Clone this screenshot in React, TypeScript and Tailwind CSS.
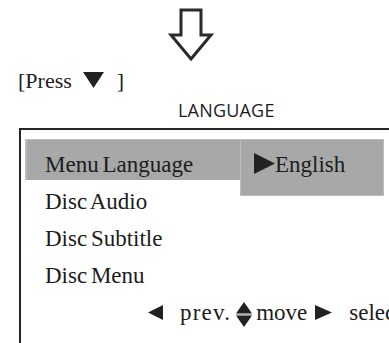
const serif = { fontFamily: '"Liberation Serif", "Times New Roman", serif' };

const DownArrow = () => (
  <svg width="46" height="53" viewBox="0 0 46 53" className="block">
    <path
      d="M13 2 H33 V27 H43 L23 51 L3 27 H13 Z"
      fill="#fff"
      stroke="#2a2a2a"
      strokeWidth="3"
      strokeLinejoin="miter"
    />
  </svg>
);

const Tri = ({ dir, w, h, className }: { dir: 'down' | 'left' | 'right'; w: number; h: number; className?: string }) => {
  const pts =
    dir === 'down'
      ? `0,0 ${w},0 ${w / 2},${h}`
      : dir === 'left'
        ? `${w},0 ${w},${h} 0,${h / 2}`
        : `0,0 ${w},${h / 2} 0,${h}`;
  return (
    <svg width={w} height={h} viewBox={`0 0 ${w} ${h}`} className={className}>
      <polygon points={pts} fill="#222" />
    </svg>
  );
};

const UpDown = ({ className }: { className?: string }) => (
  <svg width="16" height="25" viewBox="0 0 16 25" className={className}>
    <polygon points="0,11.5 8,0 16,11.5" fill="#222" />
    <polygon points="0,13.5 8,25 16,13.5" fill="#222" />
    <line x1="0" y1="12.5" x2="16" y2="12.5" stroke="#777" strokeWidth="0.6" />
  </svg>
);

const rows = ['Disc Audio', 'Disc Subtitle', 'Disc Menu'];

export default function App() {
  return (
    <div className="w-[389px] h-[343px] bg-white overflow-hidden text-[#1c1c1c]">
      <div className="pt-[8px] pl-[168px]">
        <DownArrow />
      </div>

      <div
        className="mt-[9px] pl-[18px] h-[22px] text-[22px] leading-[22px] flex items-start whitespace-nowrap"
        style={serif}
      >
        <span>[Press</span>
        <Tri dir="down" w={21} h={16} className="ml-[11px] mt-[2px]" />
        <span className="ml-[13px]">]</span>
      </div>

      <div
        className="mt-[9px] pl-[178px] text-[18px] leading-[18px] tracking-[0.2px]"
        style={{ fontFamily: '"Open Sans", "Noto Sans", sans-serif' }}
      >
        LANGUAGE
      </div>

      <div
        className="mt-[9px] ml-[19px] w-[400px] h-[220px] border-l-2 border-t-2 border-[#262626] pt-[9px] pl-[4px] text-[23px] [word-spacing:-2px]"
        style={serif}
      >
        <div className="flex items-start">
          <div className="w-[215px]">
            <div className="h-[41px] bg-[#a8a8a8] border-l-2 border-t border-[#bcbcbc] pl-[18px] pt-[13px] leading-[23px] whitespace-nowrap">
              Menu Language
            </div>
            <div className="mt-[3px]">
              {rows.map((r) => (
                <div key={r} className="h-[37px] leading-[37px] pl-[20px] whitespace-nowrap">
                  {r}
                </div>
              ))}
            </div>
          </div>
          <div className="w-[144px] h-[57px] bg-[#a8a8a8] border border-[#bcbcbc] pl-[13px]">
            <div className="flex items-start">
              <Tri dir="right" w={21} h={21} className="mt-[13px]" />
              <span className="mt-[13px] leading-[23px]">English</span>
            </div>
          </div>
        </div>

        <div className="h-[37px] pl-[123px] flex items-start whitespace-nowrap [word-spacing:0px]">
          <Tri dir="left" w={15} h={15} className="mt-[11px]" />
          <span className="ml-[17px] leading-[37px] tracking-[1.2px]">prev.</span>
          <UpDown className="ml-[5px] mt-[8px]" />
          <span className="ml-[4px] leading-[37px]">move</span>
          <Tri dir="right" w={17} h={15} className="ml-[8px] mt-[11px]" />
          <span className="ml-[17px] leading-[37px]">select</span>
        </div>
      </div>
    </div>
  );
}
